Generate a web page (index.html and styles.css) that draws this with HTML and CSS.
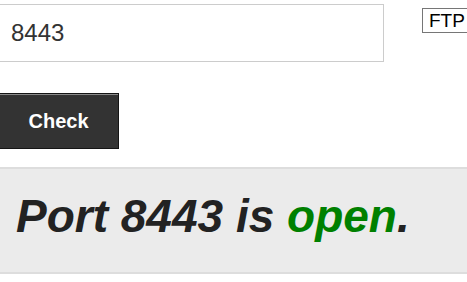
FILE: index.html
```html
<!DOCTYPE html>
<html>
<head>
<meta charset="utf-8">
<link rel="stylesheet" href="styles.css">
</head>
<body>
<div class="page">
  <div class="row">
    <div class="port-input">8443</div>
    <div class="proto">FTP</div>
  </div>
  <div class="check-btn">Check</div>
  <div class="result">Port 8443 is <span class="open">open</span>.</div>
</div>
</body>
</html>
```
FILE: styles.css
```css
html, body {
  margin: 0;
  padding: 0;
  background: #fff;
  overflow: hidden;
}
.page {
  margin-left: -2px;
  font-family: "Liberation Sans", Arial, sans-serif;
}
.row {
  display: flex;
  align-items: flex-start;
  padding-top: 4px;
}
.port-input {
  box-sizing: border-box;
  width: 386px;
  height: 58px;
  border: 1px solid #cccccc;
  padding-left: 12px;
  font-size: 24px;
  line-height: 56px;
  color: #333;
  flex-shrink: 0;
}
.proto {
  margin-left: 38px;
  margin-top: 4px;
  box-sizing: border-box;
  height: 25px;
  border: 1px solid #767676;
  padding: 0 6px;
  font-size: 19px;
  line-height: 23px;
  color: #000;
  white-space: nowrap;
  flex-shrink: 0;
}
.check-btn {
  box-sizing: border-box;
  margin-top: 31px;
  width: 121px;
  height: 56px;
  background: #333333;
  border: 1px solid #151515;
  box-shadow: inset 0 1px 0 #8a8a8a;
  color: #fff;
  font-weight: bold;
  font-size: 20px;
  line-height: 54px;
  text-align: center;
}
.result {
  margin-top: 18px;
  background: #ebebeb;
  border-top: 2px solid #dddddd;
  border-bottom: 2px solid #dddddd;
  padding: 21px 0 30px 18px;
  font-size: 46px;
  line-height: 52px;
  font-weight: bold;
  font-style: italic;
  color: #222;
  white-space: nowrap;
}
.open {
  color: #008000;
}
```
